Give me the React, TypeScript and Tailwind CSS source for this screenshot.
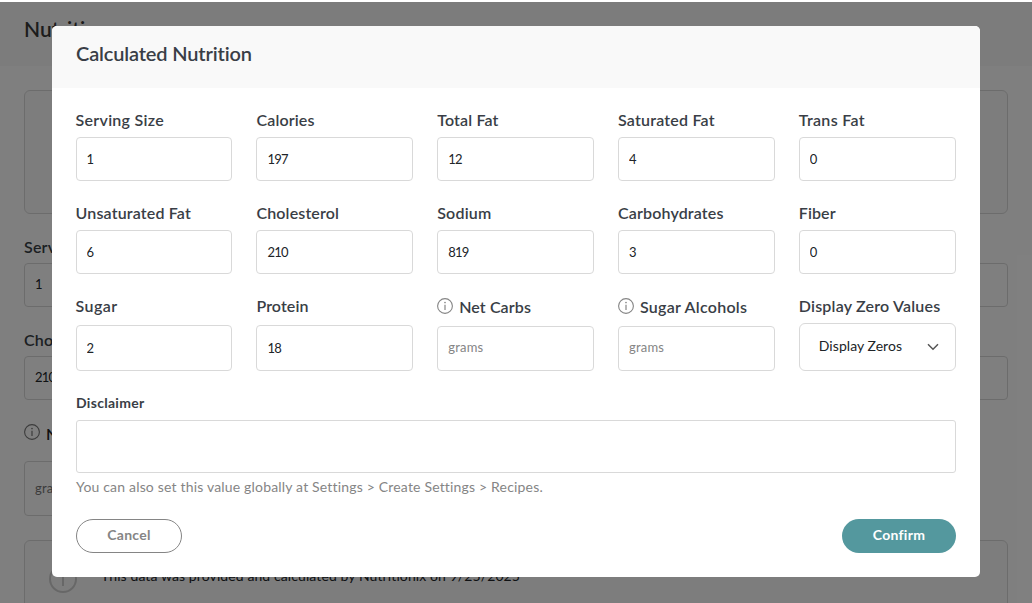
import React from "react";

type Field = {
  label: string;
  value?: string;
  track: string;
  info?: boolean;
  box?: string;
};

const fields: Field[] = [
  { label: "Serving Size", value: "1", track: "tracking-[0.27px]" },
  { label: "Calories", value: "197", track: "tracking-[0.15px]" },
  { label: "Total Fat", value: "12", track: "tracking-[0.15px]" },
  { label: "Saturated Fat", value: "4", track: "tracking-[0.2px]" },
  { label: "Trans Fat", value: "0", track: "tracking-[0.3px]" },
  { label: "Unsaturated Fat", value: "6", track: "tracking-[0.15px]" },
  { label: "Cholesterol", value: "210", track: "tracking-[0.15px]" },
  { label: "Sodium", value: "819", track: "tracking-[0.2px]" },
  { label: "Carbohydrates", value: "3", track: "tracking-[0.15px]" },
  { label: "Fiber", value: "0", track: "tracking-[0.1px]" },
  { label: "Sugar", value: "2", track: "tracking-[0.4px]", box: "mt-2 h-[46px]" },
  { label: "Protein", value: "18", track: "tracking-[0.1px]", box: "mt-2 h-[46px]" },
  { label: "Net Carbs", track: "tracking-[0.1px]", info: true, box: "mt-[9px] h-[45px] pb-1" },
  { label: "Sugar Alcohols", track: "tracking-[0.27px]", info: true, box: "mt-[9px] h-[45px] pb-1" },
];

function InfoIcon({ className }: { className: string }) {
  return (
    <svg viewBox="0 0 16 16" fill="none" stroke="currentColor" className={className}>
      <circle cx="8" cy="8" r="7.4" strokeWidth="1.1" />
      <path d="M8 6.8V12" strokeWidth="1.2" />
      <circle cx="8" cy="4.5" r="0.85" fill="currentColor" stroke="none" />
    </svg>
  );
}

function NutritionField({ field }: { field: Field }) {
  return (
    <label className="flex flex-col">
      <span className="flex h-5 items-center text-base font-semibold text-[#393e46]">
        {field.info && <InfoIcon className="mr-1.5 -mt-0.5 size-4 shrink-0 text-[#858585]" />}
        <span className={`whitespace-nowrap ${field.track} ${field.info ? "" : "pb-0.5"}`}>{field.label}</span>
      </span>
      <input
        defaultValue={field.value}
        placeholder={field.value ? undefined : "grams"}
        className={`w-full rounded border border-[#d9d9d9] px-2.5 text-[13px] text-[#202428] outline-none placeholder:text-[#858585] ${field.value ? "tracking-[-0.75px]" : "tracking-[0.2px]"} ${field.box ?? "mt-1.5 h-11"}`}
      />
    </label>
  );
}

function PageField({ label, value }: { label: string; value: string }) {
  return (
    <div className="flex h-[93px] items-start justify-between">
      <div className="w-[177px]">
        <div className="h-5 text-base leading-5 font-semibold tracking-[0.2px] text-[#393e46]">{label}</div>
        <div className="mt-1.5 flex h-11 items-center rounded border border-[#d9d9d9] px-2.5 text-[13px] tracking-[-0.75px]">
          {value}
        </div>
      </div>
      <div className="mt-[26px] h-11 w-[177px] rounded border border-[#d9d9d9]" />
    </div>
  );
}

function NutritionPage() {
  return (
    <div className="h-full">
      <header className="h-16 bg-[#f8f8f8] px-6 pt-[13px]">
        <h1 className="text-[21px] leading-[28px] font-semibold text-[#393939]">Nutrition</h1>
      </header>
      <div className="px-6 pt-6">
        <div className="mb-[23px] h-[124px] rounded-md border border-[#d9d9d9] bg-[#fbfbfb]" />
        <PageField label="Serving" value="1" />
        <PageField label="Cholesterol" value="210" />
        <div className="mt-px flex h-5 items-center gap-1.5 text-base font-semibold text-[#222]">
          <InfoIcon className="-mt-1 size-4 text-[#777]" />
          Net
        </div>
        <div className="mt-[17px] flex h-[55px] w-[177px] items-center rounded border border-[#d9d9d9] px-2.5 text-[13px] tracking-[0.2px] text-[#777]">
          grams
        </div>
        <div className="mt-6 flex h-[76px] items-center rounded-md border border-[#d9d9d9] bg-[#fbfbfb] pl-6">
          <svg viewBox="0 0 28 28" fill="none" stroke="#cfcfcf" className="mt-0.5 size-7">
            <circle cx="14" cy="14" r="13" strokeWidth="2" />
            <path d="M14 12v9" strokeWidth="2" />
          </svg>
          <p className="-mt-1 ml-6 text-sm tracking-[0.1px]">
            This data was provided and calculated by Nutritionix on 9/25/2025
          </p>
        </div>
      </div>
    </div>
  );
}

export default function App() {
  return (
    <div className="relative h-[603px] w-[1032px] overflow-hidden bg-white pt-0.5 font-['Lato',sans-serif] text-[#202428] [font-variant-ligatures:none]">
      <NutritionPage />
      <div className="absolute inset-x-0 top-0.5 bottom-0 bg-black/50 pt-6">
        <section className="mx-auto h-[551px] w-[928px] overflow-hidden rounded-[5px] bg-white">
          <header className="h-[62px] bg-[#f9f9f9] px-6 pt-[13px]">
            <h2 className="text-[20px] leading-[28px] font-semibold tracking-[-0.15px] text-[#393e46]">
              Calculated Nutrition
            </h2>
          </header>
          <div className="px-6 pt-[23px]">
            <div className="mr-[0.4px] -ml-[0.4px] grid grid-cols-5 gap-x-6 gap-y-[23px]">
              {fields.map((field) => (
                <NutritionField key={field.label} field={field} />
              ))}
              <div>
                <div className="h-5 text-base leading-[18px] font-semibold tracking-[0.2px] whitespace-nowrap text-[#393e46]">
                  Display Zero Values
                </div>
                <button className="mt-1.5 flex h-12 w-full items-center justify-between rounded-md border border-[#d9d9d9] pr-4 pl-[19px] text-sm">
                  <span className="pb-0.5 tracking-[0.05px]">Display Zeros</span>
                  <svg viewBox="0 0 12 8" fill="none" stroke="#555" strokeWidth="1.5" className="h-2 w-3">
                    <path d="M1 1.2l5 5 5-5" />
                  </svg>
                </button>
              </div>
            </div>
            <label className="mt-[22px] block">
              <span className="block h-5 text-sm leading-5 font-bold tracking-[0.3px] text-[#393e46]">Disclaimer</span>
              <input className="mt-[7px] block h-[53px] w-full rounded-[3px] border border-[#d9d9d9] px-2.5 outline-none" />
            </label>
            <p className="mt-1 h-5 text-sm leading-5 tracking-[0.18px] text-[#858585]">
              You can also set this value globally at Settings &gt; Create Settings &gt; Recipes.
            </p>
            <div className="mt-[22px] flex justify-between text-sm font-bold tracking-[0.3px]">
              <button className="h-[34px] w-[106px] rounded-full border border-[#858585] pb-0.5 text-[#858585]">
                Cancel
              </button>
              <button className="h-[34px] w-[114px] rounded-full bg-[#54989e] pb-0.5 text-white">Confirm</button>
            </div>
          </div>
        </section>
      </div>
    </div>
  );
}
